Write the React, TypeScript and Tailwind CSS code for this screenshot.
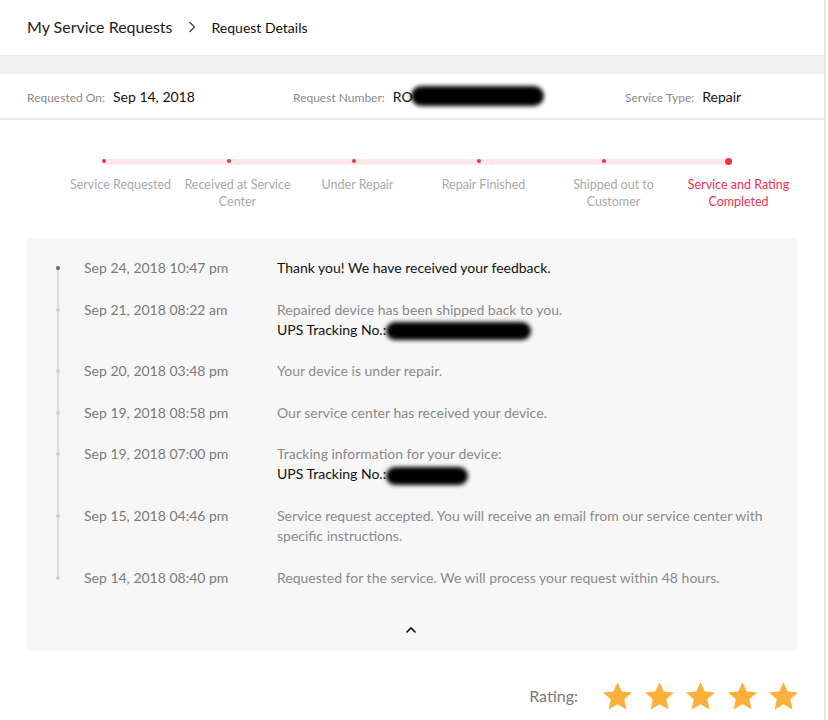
import React from "react";

const steps = [
  "Service Requested",
  "Received at Service Center",
  "Under Repair",
  "Repair Finished",
  "Shipped out to Customer",
  "Service and Rating Completed",
];

const offsets = [
  "translate-x-[17px]",
  "translate-x-[9px]",
  "translate-x-[4px]",
  "translate-x-[5px]",
  "translate-x-[10px]",
  "translate-x-[10px]",
];

type Ev = { date: string; lines: React.ReactNode[] };

const Blob = ({ w }: { w: number }) => (
  <span
    className="inline-block align-middle h-[18px] bg-black rounded-full blur-[2px] -ml-[4px]"
    style={{ width: w }}
  />
);

const events: Ev[] = [
  { date: "Sep 24, 2018 10:47 pm", lines: [<span className="text-[#111]">Thank you! We have received your feedback.</span>] },
  {
    date: "Sep 21, 2018 08:22 am",
    lines: [
      <span>Repaired device has been shipped back to you.</span>,
      <span className="text-[#111]">UPS Tracking No.: <Blob w={145} /></span>,
    ],
  },
  { date: "Sep 20, 2018 03:48 pm", lines: [<span>Your device is under repair.</span>] },
  { date: "Sep 19, 2018 08:58 pm", lines: [<span>Our service center has received your device.</span>] },
  {
    date: "Sep 19, 2018 07:00 pm",
    lines: [
      <span>Tracking information for your device:</span>,
      <span className="text-[#111]">UPS Tracking No.: <Blob w={82} /></span>,
    ],
  },
  {
    date: "Sep 15, 2018 04:46 pm",
    lines: [
      <span>Service request accepted. You will receive an email from our service center with specific instructions.</span>,
    ],
  },
  { date: "Sep 14, 2018 08:40 pm", lines: [<span>Requested for the service. We will process your request within 48 hours.</span>] },
];

const Star = () => (
  <svg width="31" height="30" viewBox="0 0 24 23">
    <path
      d="M12 0.8l3.3 7.2 7.9 0.8-5.9 5.3 1.7 7.8L12 17.9l-6.9 4 1.7-7.8L0.8 8.8l7.9-0.8z"
      fill="#fbb03b"
    />
  </svg>
);

export default function App() {
  return (
    <div
      className="w-[828px] min-h-[720px] bg-white"
      style={{ fontFamily: "Lato, 'Open Sans', sans-serif" }}
    >
      <div className="w-[826px] border-r-2 border-[#e6e6e6] min-h-[720px]">
        {/* Header */}
        <div className="h-[55px] flex items-center pl-[27px] pb-[1px]">
          <span className="text-[16px] text-[#222]">My Service Requests</span>
          <svg className="ml-[15px] mr-[16px]" width="8" height="12" viewBox="0 0 8 12">
            <path d="M1.5 1l5 5-5 5" stroke="#333" strokeWidth="1.1" fill="none" />
          </svg>
          <span className="text-[14px] text-[#111]">Request Details</span>
        </div>
        <div className="h-[19px] bg-[#f1f1f1] border-t border-[#e8e8e8]" />

        {/* Info row */}
        <div className="h-[46px] flex items-center border-b-2 border-[#ececec]">
          <div className="flex items-baseline pl-[27px] w-[293px]">
            <span className="text-[12px] text-[#8a8a8a]">Requested On:</span>
            <span className="ml-[8px] text-[14px] text-[#111]">Sep 14, 2018</span>
          </div>
          <div className="flex items-baseline w-[332px]">
            <span className="text-[12px] text-[#8a8a8a]">Request Number:</span>
            <span className="ml-[8px] text-[14px] text-[#111]">RO</span>
            <span className="inline-block self-center h-[20px] w-[133px] bg-black rounded-full blur-[2px] -ml-[2px]" />
          </div>
          <div className="flex items-baseline">
            <span className="text-[12px] text-[#8a8a8a]">Service Type:</span>
            <span className="ml-[8px] text-[14px] text-[#111]">Repair</span>
          </div>
        </div>

        {/* Stepper */}
        <div className="relative pt-[38px] pl-[41px] h-[118px]">
          <div className="absolute left-[103px] top-[39px] w-[625px] h-[6px] bg-[#fce8e9]" />
          <div className="grid grid-cols-[repeat(6,125px)] relative">
            {steps.map((s, i) => (
              <div key={s} className="flex flex-col items-center">
                <div className="h-[6px] flex items-center justify-center">
                  <span
                    className={
                      i === 5
                        ? "w-[7px] h-[7px] rounded-full bg-[#f0304d]"
                        : "w-[4px] h-[4px] rounded-full bg-[#f0304d]"
                    }
                  />
                </div>
                <div
                  className={
                    "mt-[12px] w-[122px] shrink-0 text-center text-[12.5px] leading-[17px] " +
                    offsets[i] +
                    " " +
                    (i === 5 ? "text-[#f0304d]" : "text-[#a9a9a9]")
                  }
                >
                  {s}
                </div>
              </div>
            ))}
          </div>
        </div>

        {/* Timeline */}
        <div className="ml-[27px] w-[770px] h-[413px] bg-[#f7f7f7] pt-[20px] relative">
          <div className="absolute left-[30px] top-[31px] w-[2px] h-[310px] bg-[#dedede]" />
          <div className="flex flex-col gap-[21.5px]">
            {events.map((e, i) => (
              <div key={i} className="flex text-[14px] leading-[20px]">
                <div className="w-[57px] relative shrink-0">
                  <span
                    className={
                      "absolute left-[29px] top-[8px] w-[4px] h-[4px] rounded-full " +
                      (i === 0 ? "bg-[#666]" : "bg-[#cfcfcf]")
                    }
                  />
                </div>
                <div className="w-[193px] shrink-0 text-[#7a7a7a]">{e.date}</div>
                <div className="w-[495px] text-[#8a8a8a] flex flex-col">
                  {e.lines.map((l, j) => (
                    <div key={j}>{l}</div>
                  ))}
                </div>
              </div>
            ))}
          </div>
          <div className="flex justify-center mt-[38px] pr-[3px]">
            <svg width="12" height="8" viewBox="0 0 12 8">
              <path d="M1.5 6.5L6 2l4.5 4.5" stroke="#111" strokeWidth="1.6" fill="none" />
            </svg>
          </div>
        </div>

        {/* Rating */}
        <div className="flex items-center justify-end pr-[25px] mt-[30px]">
          <span className="text-[16px] text-[#777] mr-[24px]">Rating:</span>
          <div className="flex gap-[10.5px]">
            <Star />
            <Star />
            <Star />
            <Star />
            <Star />
          </div>
        </div>
      </div>
    </div>
  );
}
